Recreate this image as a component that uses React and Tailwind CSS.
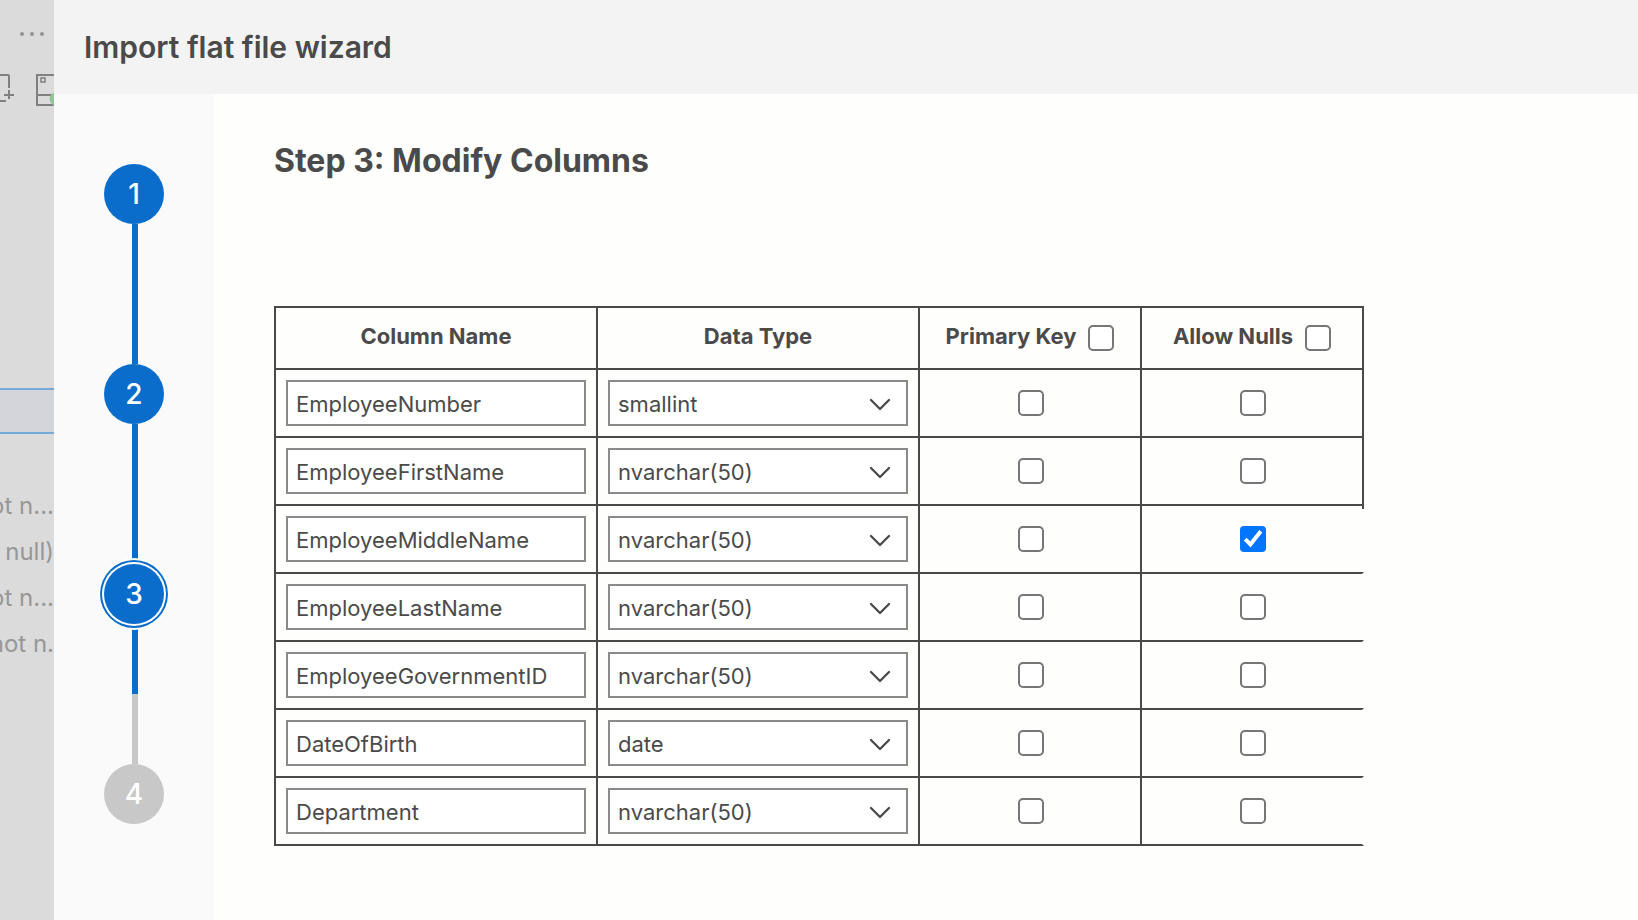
import { useState } from "react";

const DATA_TYPES = ["smallint", "int", "date", "datetime", "nvarchar(50)"];

const COLUMNS = [
  { name: "EmployeeNumber", type: "smallint", nulls: false },
  { name: "EmployeeFirstName", type: "nvarchar(50)", nulls: false },
  { name: "EmployeeMiddleName", type: "nvarchar(50)", nulls: true },
  { name: "EmployeeLastName", type: "nvarchar(50)", nulls: false },
  { name: "EmployeeGovernmentID", type: "nvarchar(50)", nulls: false },
  { name: "DateOfBirth", type: "date", nulls: false },
  { name: "Department", type: "nvarchar(50)", nulls: false },
];

function Checkbox({ label, id, defaultChecked = false }) {
  return (
    <span className="relative inline-flex size-[26px] shrink-0">
      <input
        type="checkbox"
        id={id}
        aria-label={label}
        defaultChecked={defaultChecked}
        className="peer size-[26px] appearance-none rounded-[5px] border-2 border-[#767676] bg-white checked:rounded-[4px] checked:border-[#0075ff] checked:bg-[#0075ff]"
      />
      <svg
        viewBox="0 0 26 26"
        className="pointer-events-none absolute inset-0 hidden size-[26px] peer-checked:block"
        aria-hidden="true"
      >
        <path d="M5.200 13.200L10.400 18.400L20.800 5.200" fill="none" stroke="#fff" strokeWidth="4" />
      </svg>
    </span>
  );
}

function Explorer() {
  return (
    <aside className="flex w-[54px] shrink-0 flex-col overflow-hidden bg-[#dbdbdb] text-2xl text-[#979797]">
      <button type="button" aria-label="More actions" className="mt-[30px] flex h-2 justify-end pr-[10px]">
        <svg width="24" height="8" viewBox="0 0 24 8" fill="#919191">
          <circle cx="2" cy="4" r="2" />
          <circle cx="12" cy="4" r="2" />
          <circle cx="22" cy="4" r="2" />
        </svg>
      </button>
      <svg width="54" height="36" viewBox="0 0 54 36" className="mt-8 shrink-0" fill="none" stroke="#808080" strokeWidth="2" aria-hidden="true">
        <path d="M0 5H8Q9 5 9 6V18M9 20V29M4 25H14M0 31H6" />
        <path d="M54 5H37V35H54M37 25H54" />
        <rect x="41" y="8" width="4" height="4" strokeWidth="1.500" />
        <circle cx="56" cy="29" r="6.500" fill="#90c695" stroke="none" />
      </svg>
      <div className="mt-[282px] h-[46px] shrink-0 border-y-2 border-[#74a9d8] bg-[#d4d5da]" />
      <ul className="mt-[49px] whitespace-nowrap leading-[46px]">
        <li className="flex justify-end">not n...</li>
        <li className="flex justify-end">null)</li>
        <li className="flex justify-end">not n...</li>
        <li className="flex justify-end">not n.</li>
      </ul>
    </aside>
  );
}

function Step({ n, state }) {
  return (
    <button
      type="button"
      aria-current={state === "current" ? "step" : undefined}
      className={
        "relative z-10 flex size-[60px] shrink-0 items-center justify-center rounded-full text-[28px] font-medium text-white " +
        (state === "todo" ? "bg-[#c8c8c8]" : "bg-[#0b6dcb]") +
        (state === "current" ? " shadow-[0_0_0_2px_#fff,0_0_0_4px_#0b6dcb,0_0_0_6px_#fff]" : "")
      }
    >
      {n}
    </button>
  );
}

function Steps() {
  return (
    <nav aria-label="Wizard steps" className="flex w-40 shrink-0 flex-col items-start bg-[#fafafb] pt-[70px] pl-[50px]">
      <Step n={1} state="done" />
      <div className="ml-7 h-[140px] w-[6px] bg-[#0b6dcb]" />
      <Step n={2} state="done" />
      <div className="ml-7 h-[140px] w-[6px] bg-[#0b6dcb]" />
      <Step n={3} state="current" />
      <div className="ml-7 h-[70px] w-[6px] bg-[#0b6dcb]" />
      <div className="ml-7 h-[70px] w-[6px] bg-[#c8c8c8]" />
      <Step n={4} state="todo" />
    </nav>
  );
}

function ColumnRow({ column, index, last }) {
  const [type, setType] = useState(column.type);
  const line = "border-l-2 border-t-2 border-[#4a4a4a] py-[10px]" + (last ? " border-b-2" : "");
  const edge =
    index < 2
      ? " border-r-2"
      : " border-r-2 border-r-transparent" +
        (index === 2
          ? " relative after:absolute after:-top-[2px] after:-right-[2px] after:h-[5px] after:w-[2px] after:bg-[#4a4a4a]"
          : "");
  return (
    <tr>
      <td className={line + " px-[10px]"}>
        <input
          type="text"
          aria-label={"Name of column " + (index + 1)}
          defaultValue={column.name}
          className="block h-[46px] w-[300px] border-2 border-[#8a8a8a] bg-white px-2 pt-[2px] text-[22px]"
        />
      </td>
      <td className={line + " px-[10px]"}>
        <div className="relative">
          <select
            aria-label={"Data type of " + column.name}
            value={type}
            onChange={(e) => setType(e.target.value)}
            className="block h-[46px] w-[300px] appearance-none border-2 border-[#8a8a8a] bg-white px-2 pt-[2px] text-[22px]"
          >
            {DATA_TYPES.map((t) => (
              <option key={t}>{t}</option>
            ))}
          </select>
          <svg
            viewBox="0 0 22 14"
            className="pointer-events-none absolute top-[17px] right-[17px] h-[14px] w-[22px]"
            fill="none"
            stroke="#4a4a4a"
            strokeWidth="2.300"
            strokeLinecap="round"
            strokeLinejoin="round"
            aria-hidden="true"
          >
            <path d="M2 3L11 12L20 3" />
          </svg>
        </div>
      </td>
      <td className={line + " pl-[2px]"}>
        <div className="flex justify-center">
          <Checkbox label={column.name + " is a primary key"} />
        </div>
      </td>
      <td className={line + " pl-[2px]" + edge}>
        <div className="flex justify-center">
          <Checkbox label={column.name + " allows nulls"} defaultChecked={column.nulls} />
        </div>
      </td>
    </tr>
  );
}

export default function App() {
  const head = "h-[62px] border-l-2 border-t-2 border-[#4a4a4a] px-2 text-[22px] font-bold";
  return (
    <div className="flex min-h-screen bg-[#fefefd] font-['Inter',sans-serif] text-[#4a4a4a]">
      <Explorer />
      <div className="flex min-w-0 grow flex-col">
        <header className="flex h-[94px] shrink-0 items-center bg-[#f3f3f3] px-[30px]">
          <h1 className="text-[30px] font-semibold">Import flat file wizard</h1>
        </header>
        <div className="flex grow">
          <Steps />
          <main className="grow px-[60px] pt-[47px]">
            <h2 className="text-[32px] leading-[40px] font-bold">Step 3: Modify Columns</h2>
            <table className="mt-[125px] border-separate border-spacing-0">
              <thead>
                <tr>
                  <th className={head + " pb-1"}>Column Name</th>
                  <th className={head + " pb-1"}>Data Type</th>
                  <th className={head + " w-[222px]"}>
                    <div className="flex items-center justify-center gap-3">
                      <label htmlFor="pk-all" className="pb-1">Primary Key</label>
                      <Checkbox id="pk-all" />
                    </div>
                  </th>
                  <th className={head + " w-[224px] border-r-2"}>
                    <div className="flex items-center justify-center gap-3">
                      <label htmlFor="nulls-all" className="pb-1">Allow Nulls</label>
                      <Checkbox id="nulls-all" />
                    </div>
                  </th>
                </tr>
              </thead>
              <tbody>
                {COLUMNS.map((c, i) => (
                  <ColumnRow key={c.name} column={c} index={i} last={i === COLUMNS.length - 1} />
                ))}
              </tbody>
            </table>
          </main>
        </div>
      </div>
    </div>
  );
}
